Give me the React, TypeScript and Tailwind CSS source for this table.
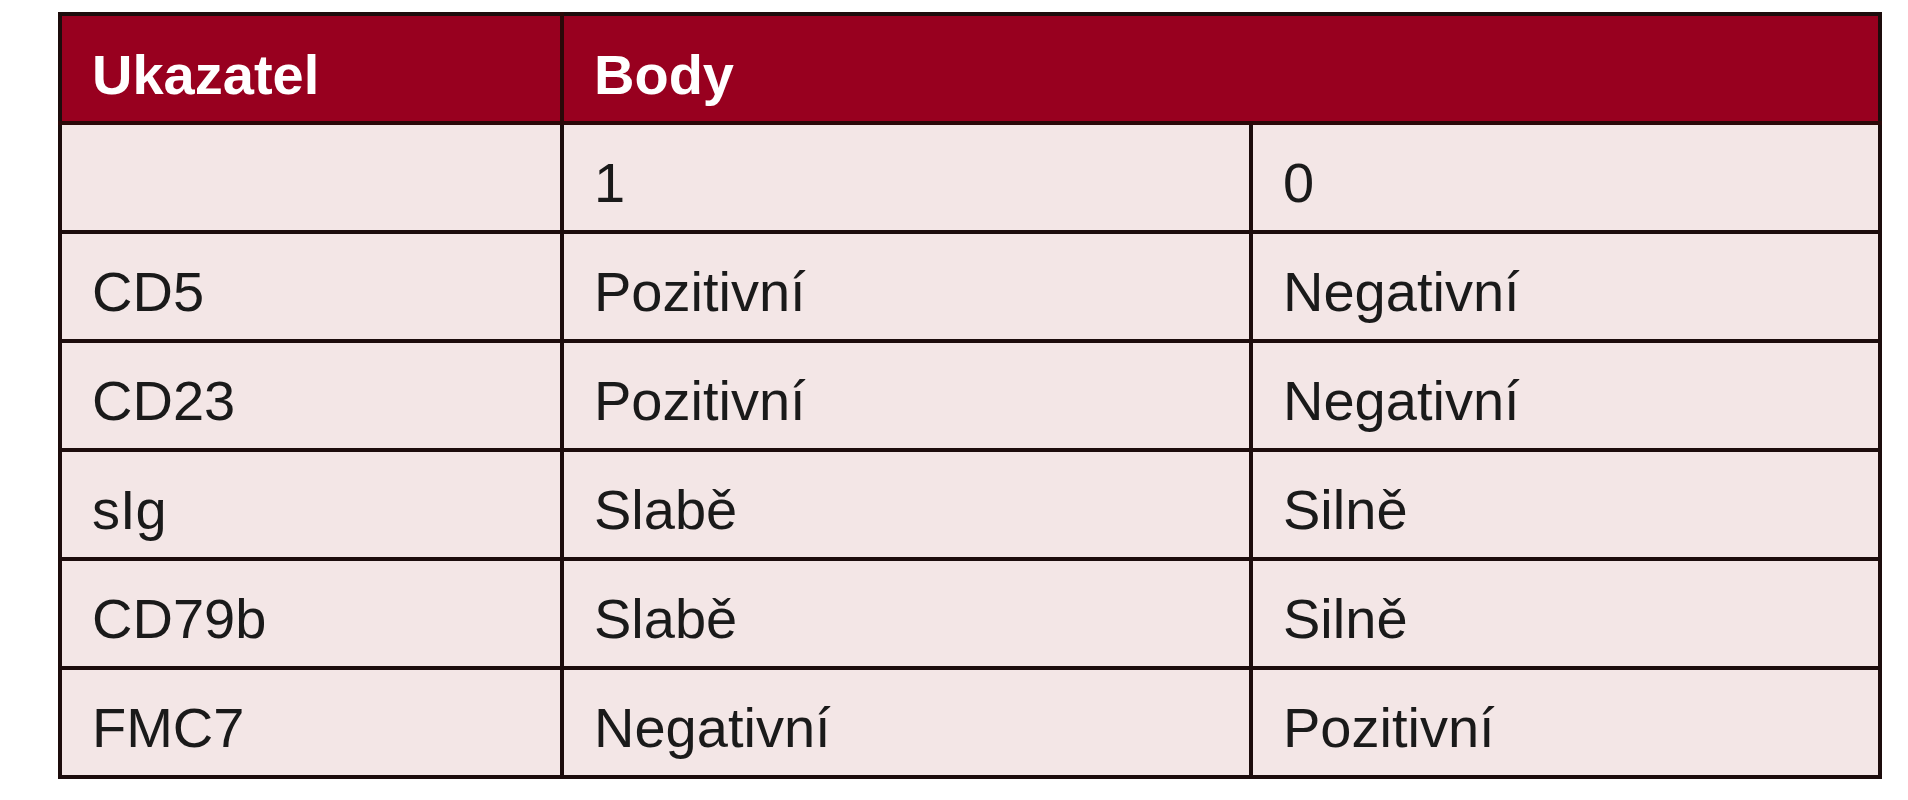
const rows: [string, string, string][] = [
  ["", "1", "0"],
  ["CD5", "Pozitivní", "Negativní"],
  ["CD23", "Pozitivní", "Negativní"],
  ["sIg", "Slabě", "Silně"],
  ["CD79b", "Slabě", "Silně"],
  ["FMC7", "Negativní", "Pozitivní"],
];

export default function App() {
  return (
    <div className="min-h-[800px] bg-white pl-[58px] pt-[12px] font-['Liberation_Sans',Arial,sans-serif]">
      <table className="w-[1820px] table-fixed border-collapse border-[4px] border-[#1c0c0c] text-[56px] leading-none">
        <colgroup>
          <col className="w-[502px]" />
          <col className="w-[689px]" />
          <col className="w-[629px]" />
        </colgroup>
        <thead>
          <tr className="h-[109px] bg-[#98001f] text-white">
            <th className="border-r-[4px] border-b-[4px] border-[#2a0808] pl-[30px] pt-[12px] text-left font-bold">
              Ukazatel
            </th>
            <th colSpan={2} className="border-b-[4px] border-[#2a0808] pl-[30px] pt-[12px] text-left font-bold">
              Body
            </th>
          </tr>
        </thead>
        <tbody className="bg-[#f3e6e6] text-[#1a1a1a]">
          {rows.map((row, i) => (
            <tr key={i} className="h-[109px]">
              {row.map((cell, j) => (
                <td
                  key={j}
                  className="border-[4px] border-[#1c0c0c] pl-[30px] pt-[10px] align-middle"
                >
                  {cell}
                </td>
              ))}
            </tr>
          ))}
        </tbody>
      </table>
    </div>
  );
}
